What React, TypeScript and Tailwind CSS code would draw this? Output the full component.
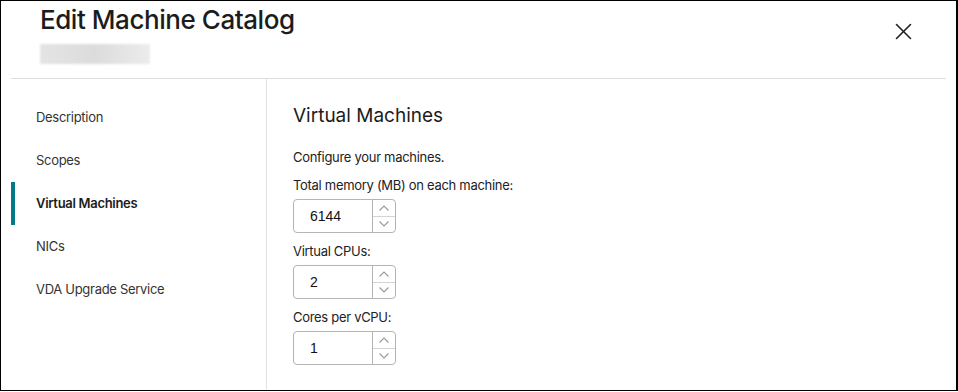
const NAV_ITEMS = ["Description", "Scopes", "Virtual Machines", "NICs", "VDA Upgrade Service"]

const FIELDS = [
  { label: "Total memory (MB) on each machine:", value: "6144" },
  { label: "Virtual CPUs:", value: "2" },
  { label: "Cores per vCPU:", value: "1" },
]

const SANS = "font-['Inter','Liberation_Sans',sans-serif]"

export default function App() {
  const active = "Virtual Machines"

  return (
    <div className="w-[958px] h-[392px] bg-white">
      <div
        className={`w-[958px] h-[391px] flex flex-col border-black border-t border-l border-r-2 border-b overflow-hidden text-[#222] ${SANS}`}
      >
        {/* Header */}
        <header className="mx-[10px] h-[78px] flex-shrink-0 flex items-start justify-between border-b border-[#dedede]">
          <div className="pl-[29px] pt-[3px]">
            <h1 className="text-[26px] leading-[32px] font-medium text-[#1c1c1c] tracking-[-0.45px]">
              Edit Machine Catalog
            </h1>
            <div className="mt-[8px] w-[110px] h-[20px] bg-gradient-to-r from-[#e4e4e4] via-[#dcdcdc] to-[#ececec] blur-[1px]" />
          </div>
          <button className="mt-[22px] mr-[34px] w-[17px] h-[17px] flex items-center justify-center" aria-label="Close">
            <CloseIcon />
          </button>
        </header>

        <div className="flex flex-1 mx-[10px] min-h-0 tracking-[-0.3px]">
          {/* Side nav */}
          <nav className="w-[256px] flex-shrink-0 border-r border-[#e2e2e2] pt-[17px]">
            {NAV_ITEMS.map((item) => {
              const isActive = item === active
              return (
                <div key={item} className="relative h-[43px] flex items-center pl-[25px]">
                  {isActive && <div className="absolute left-0 top-0 w-[4px] h-full bg-[#05798a]" />}
                  <span
                    className={`text-[13px] ${isActive ? "font-semibold text-[#1c1c1c]" : "text-[#333]"}`}
                  >
                    {item}
                  </span>
                </div>
              )
            })}
          </nav>

          {/* Content */}
          <main className="flex-1 pl-[26px] pt-[23px]">
            <h2 className="text-[19px] leading-[28px] text-[#1c1c1c] tracking-normal">Virtual Machines</h2>
            <p className="mt-[17px] text-[13px] leading-[20px] text-[#222]">Configure your machines.</p>
            <div className="mt-[8px] flex flex-col gap-[8px]">
              {FIELDS.map((f) => (
                <div key={f.label} className="flex flex-col gap-[4px]">
                  <label className="text-[13px] leading-[20px] text-[#222]">{f.label}</label>
                  <NumberInput value={f.value} />
                </div>
              ))}
            </div>
          </main>
        </div>
      </div>
    </div>
  )
}

function NumberInput({ value }: { value: string }) {
  return (
    <div className="w-[103px] h-[34px] flex border border-[#b4b4b4] rounded-[4px] bg-white tracking-normal">
      <div className="flex-1 flex items-center pl-[16px] font-['Liberation_Sans',Arial,sans-serif] text-[14px] text-[#111]">
        {value}
      </div>
      <div className="w-[23px] flex flex-col border-l border-[#b4b4b4]">
        <div className="flex-1 flex items-center justify-center border-b border-[#d4d4d4]">
          <Chevron up />
        </div>
        <div className="flex-1 flex items-center justify-center">
          <Chevron />
        </div>
      </div>
    </div>
  )
}

function Chevron({ up = false }: { up?: boolean }) {
  return (
    <svg width="12" height="8" viewBox="0 0 12 8" fill="none" stroke="#9a9a9a" strokeWidth="1.1" aria-hidden="true">
      {up ? <polyline points="1.5 6.5 6 2 10.5 6.5" /> : <polyline points="1.5 1.5 6 6 10.5 1.5" />}
    </svg>
  )
}

function CloseIcon() {
  return (
    <svg width="17" height="17" viewBox="0 0 17 17" fill="none" stroke="#222" strokeWidth="1.6" strokeLinecap="round" aria-hidden="true">
      <line x1="1.5" y1="1.5" x2="15.5" y2="15.5" />
      <line x1="15.5" y1="1.5" x2="1.5" y2="15.5" />
    </svg>
  )
}
